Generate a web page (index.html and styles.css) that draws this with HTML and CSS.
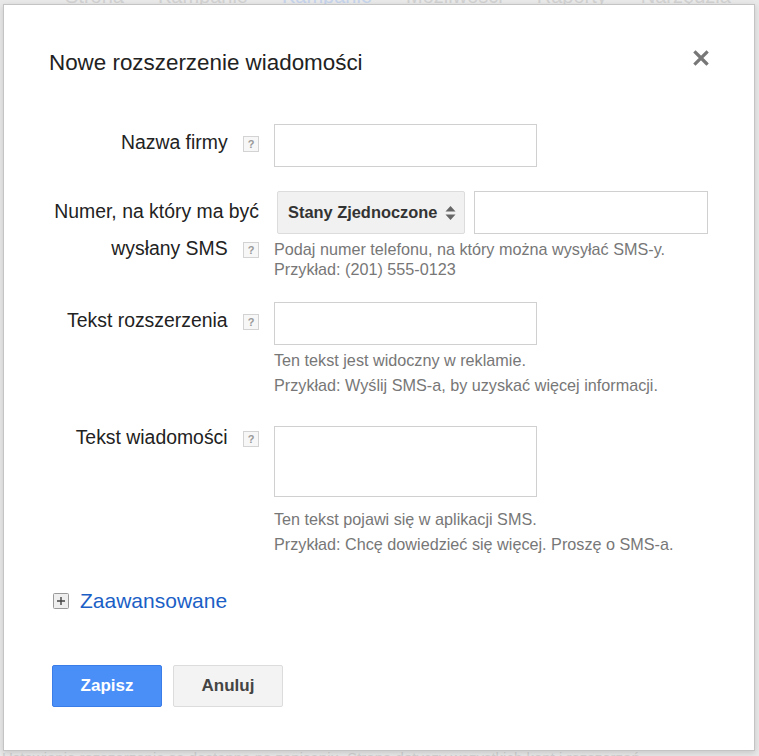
FILE: index.html
```html
<!DOCTYPE html>
<html lang="pl">
<head>
    <meta charset="UTF-8">
    <meta name="viewport" content="width=device-width, initial-scale=1.0">
    <title>Nowe rozszerzenie wiadomości</title>
    <link rel="stylesheet" href="styles.css">
</head>
<body>
    <!-- page behind the dialog, dimmed -->
    <div class="backdrop">
        <div class="backdrop-tabs">
            <span>Strona</span>
            <span>Kampanie</span>
            <span class="active">Kampanie</span>
            <span>Możliwości</span>
            <span>Raporty</span>
            <span>Narzędzia</span>
        </div>
        <div class="backdrop-footer">Ustawienia rozszerzenia są dostępne po zapisaniu. Strona dotyczy wszystkich kont i rozszerzeń.</div>
    </div>

    <div class="dialog">
        <div class="dialog-header">
            <h2 class="dialog-title">Nowe rozszerzenie wiadomości</h2>
            <button class="close-btn" title="Zamknij">
                <svg width="16" height="16" viewBox="0 0 16 16">
                    <path d="M2.5 2.5 L13.5 13.5 M13.5 2.5 L2.5 13.5" stroke="#777" stroke-width="3.2" stroke-linecap="square"/>
                </svg>
            </button>
        </div>

        <div class="form">
            <div class="row row-name">
                <label class="field-label">Nazwa firmy <span class="help">?</span></label>
                <div class="field">
                    <input class="text-input" type="text">
                </div>
            </div>

            <div class="row row-phone">
                <label class="field-label">Numer, na który ma być wysłany SMS <span class="help">?</span></label>
                <div class="field">
                    <div class="phone-line">
                        <div class="select">
                            <span>Stany Zjednoczone</span>
                            <svg width="11" height="16" viewBox="0 0 11 16">
                                <path d="M5.5 1 L10.5 6.5 L0.5 6.5 Z M5.5 15 L10.5 9.5 L0.5 9.5 Z" fill="#666"/>
                            </svg>
                        </div>
                        <input class="text-input phone-input" type="text">
                    </div>
                    <p class="hint">Podaj numer telefonu, na który można wysyłać SMS-y.<br>Przykład: (201) 555-0123</p>
                </div>
            </div>

            <div class="row row-ext">
                <label class="field-label">Tekst rozszerzenia <span class="help">?</span></label>
                <div class="field">
                    <input class="text-input" type="text">
                    <p class="hint">Ten tekst jest widoczny w reklamie.</p>
                    <p class="hint">Przykład: Wyślij SMS-a, by uzyskać więcej informacji.</p>
                </div>
            </div>

            <div class="row row-msg">
                <label class="field-label">Tekst wiadomości <span class="help">?</span></label>
                <div class="field">
                    <textarea class="text-area"></textarea>
                    <p class="hint first">Ten tekst pojawi się w aplikacji SMS.</p>
                    <p class="hint">Przykład: Chcę dowiedzieć się więcej. Proszę o SMS-a.</p>
                </div>
            </div>
        </div>

        <a class="advanced" href="#">
            <span class="plus-box">
                <svg width="16" height="16" viewBox="0 0 16 16">
                    <rect x="0.5" y="0.5" width="15" height="15" rx="1" fill="#eeeeee" stroke="#999"/>
                    <path d="M4 8 H12 M8 4 V12" stroke="#444" stroke-width="1.4"/>
                </svg>
            </span>
            Zaawansowane
        </a>

        <div class="actions">
            <button class="btn btn-primary">Zapisz</button>
            <button class="btn">Anuluj</button>
        </div>
    </div>
</body>
</html>
```

FILE: styles.css
```css
body {
    margin: 0;
    padding: 0;
    font-family: 'Liberation Sans', Arial, sans-serif;
    background-color: #e9e9e9;
    color: #222;
    overflow: hidden;
}

/* Dimmed page behind the dialog */
.backdrop {
    height: 756px;
    overflow: hidden;
    display: flex;
    flex-direction: column;
    justify-content: space-between;
    color: #d2d2d2;
    font-size: 20px;
}

.backdrop-tabs {
    display: flex;
    gap: 34px;
    padding-left: 65px;
    margin-top: -15px;
    white-space: nowrap;
}

.backdrop-tabs .active {
    color: #c6d4ec;
}

.backdrop-footer {
    white-space: nowrap;
    font-size: 15px;
    padding-left: 2px;
    margin-bottom: -10px;
}

.dialog {
    position: absolute;
    top: 4px;
    left: 3px;
    width: 750px;
    height: 745px;
    background: #fff;
    border: 1px solid #c4c4c4;
    box-shadow: 0 2px 6px rgba(0, 0, 0, 0.15);
    box-sizing: content-box;
}

.dialog-header {
    display: flex;
    justify-content: space-between;
    align-items: center;
    padding: 44px 45px 0 45px;
}

.dialog-title {
    margin: 0;
    font-size: 22.4px;
    font-weight: normal;
    color: #222;
    line-height: 28px;
}

.close-btn {
    background: none;
    border: none;
    padding: 0;
    cursor: pointer;
    width: 16px;
    height: 16px;
    margin-top: -10px;
}

.form {
    margin-top: 47px;
    padding-left: 45px;
}

.row {
    display: grid;
    grid-template-columns: 210px 1fr;
    column-gap: 15px;
}

.field-label {
    text-align: right;
    font-size: 19.4px;
    line-height: 37px;
    color: #222;
}

.help {
    display: inline-block;
    width: 14px;
    height: 14px;
    margin-left: 10px;
    border: 1px solid #d3d3d3;
    background: #f7f7f7;
    color: #999;
    font-size: 11px;
    font-weight: bold;
    line-height: 14px;
    text-align: center;
    vertical-align: 1px;
}

.text-input {
    display: block;
    box-sizing: border-box;
    width: 263px;
    height: 43px;
    border: 1px solid #d0d0d0;
    margin: 0;
    padding: 0 8px;
    font: inherit;
}

.text-area {
    display: block;
    box-sizing: border-box;
    width: 263px;
    height: 71px;
    border: 1px solid #d0d0d0;
    margin: 0;
    resize: none;
    font: inherit;
}

.phone-line {
    display: flex;
    align-items: center;
    gap: 9px;
    margin-left: 3px;
}

.select {
    box-sizing: border-box;
    width: 188px;
    height: 43px;
    display: flex;
    align-items: center;
    justify-content: space-between;
    padding: 0 8px 0 10px;
    background: #f1f1f1;
    border: 1px solid #dcdcdc;
    border-radius: 2px;
    font-size: 16.4px;
    font-weight: bold;
    color: #333;
}

.phone-input {
    width: 234px;
}

.hint {
    margin: 5px 0 0 0;
    font-size: 16.2px;
    line-height: 20px;
    color: #777;
}

.row-name {
    margin-bottom: 24px;
}

.row-phone {
    margin-bottom: 23px;
}

.row-phone .field-label {
    padding-top: 2px;
}

.row-ext {
    margin-bottom: 31px;
}

.row-msg .field-label {
    margin-top: -7px;
}

.row-msg .hint.first {
    margin-top: 12px;
}

.advanced {
    display: flex;
    align-items: center;
    gap: 11px;
    margin: 37px 0 0 49px;
    font-size: 21px;
    line-height: 20px;
    color: #1b5fc6;
    text-decoration: none;
}

.plus-box svg {
    display: block;
}

.actions {
    display: flex;
    gap: 11px;
    margin: 54px 0 0 48px;
}

.btn {
    width: 110px;
    height: 42px;
    border: 1px solid #dcdcdc;
    border-radius: 2px;
    background: #f3f3f3;
    color: #444;
    font-family: inherit;
    font-size: 17px;
    font-weight: bold;
    cursor: pointer;
}

.btn-primary {
    background: #4a8ef8;
    border-color: #3b7de8;
    color: #fff;
}
```
